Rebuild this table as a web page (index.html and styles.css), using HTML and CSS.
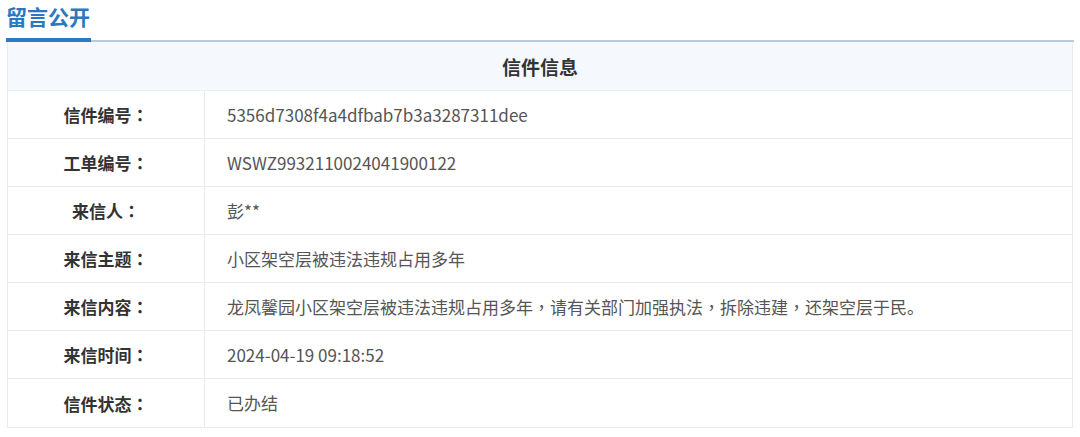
FILE: index.html
```html
<!DOCTYPE html>
<html lang="zh-CN">
<head>
<meta charset="utf-8">
<title>留言公开</title>
<link rel="stylesheet" href="styles.css">
</head>
<body>
<div class="page">
  <div class="tabs">
    <div class="tab active">留言公开</div>
  </div>
  <div class="table">
    <div class="thead">信件信息</div>
    <div class="row"><div class="label">信件编号<span class="p">：</span></div><div class="value">5356d7308f4a4dfbab7b3a3287311dee</div></div>
    <div class="row"><div class="label">工单编号<span class="p">：</span></div><div class="value">WSWZ9932110024041900122</div></div>
    <div class="row"><div class="label">来信人<span class="p">：</span></div><div class="value">彭**</div></div>
    <div class="row"><div class="label">来信主题<span class="p">：</span></div><div class="value">小区架空层被违法违规占用多年</div></div>
    <div class="row"><div class="label">来信内容<span class="p">：</span></div><div class="value">龙凤馨园小区架空层被违法违规占用多年<span class="cm" lang="zh-TW">，</span>请有关部门加强执法<span class="cm" lang="zh-TW">，</span>拆除违建<span class="cm" lang="zh-TW">，</span>还架空层于民。</div></div>
    <div class="row"><div class="label">来信时间<span class="p">：</span></div><div class="value">2024-04-19 09:18:52</div></div>
    <div class="row"><div class="label">信件状态<span class="p">：</span></div><div class="value">已办结</div></div>
  </div>
</div>
</body>
</html>
```

FILE: styles.css
```css
html, body {
  margin: 0;
  padding: 0;
  background: #ffffff;
}
body {
  font-family: "Noto Sans CJK SC", "Noto Sans", sans-serif;
  color: #333;
}
.page {
  padding: 0 6px;
}
.tabs {
  display: flex;
  height: 40px;
  border-bottom: 2px solid #b8cadb;
}
.tab {
  font-size: 21px;
  font-weight: bold;
  color: #2a78c0;
  line-height: 30px;
  padding-top: 1px;
  width: 85px;
  box-sizing: border-box;
  white-space: nowrap;
}
.tab.active {
  border-bottom: 4px solid #2a7ac4;
  margin-bottom: -2px;
  height: 42px;
}
.table {
  border: 1px solid #e9ecef;
  border-top: none;
  margin-right: 1px;
  margin-left: 1px;
}
.thead {
  height: 48px;
  background: #f5f8fc;
  border-bottom: 1px solid #edf0f3;
  display: flex;
  align-items: center;
  justify-content: center;
  font-size: 19px;
  font-weight: bold;
  color: #333;
}
.row {
  display: grid;
  grid-template-columns: 197px 1fr;
  height: 48px;
  border-bottom: 1px solid #e9ecef;
  box-sizing: border-box;
}
.row:last-child {
  border-bottom: none;
}
.label {
  display: flex;
  align-items: center;
  justify-content: center;
  font-size: 17px;
  font-weight: bold;
  color: #333;
  border-right: 1px solid #e9ecef;
}
.value {
  display: block;
  line-height: 47px;
  padding-left: 22px;
  font-size: 17px;
  color: #555;
  white-space: nowrap;
}
.p {
  font-family: "Noto Sans CJK TC", "Noto Sans CJK SC", sans-serif;
}
.cm {
  font-family: "Noto Sans CJK TC", "Noto Sans CJK SC", sans-serif;
}
```
